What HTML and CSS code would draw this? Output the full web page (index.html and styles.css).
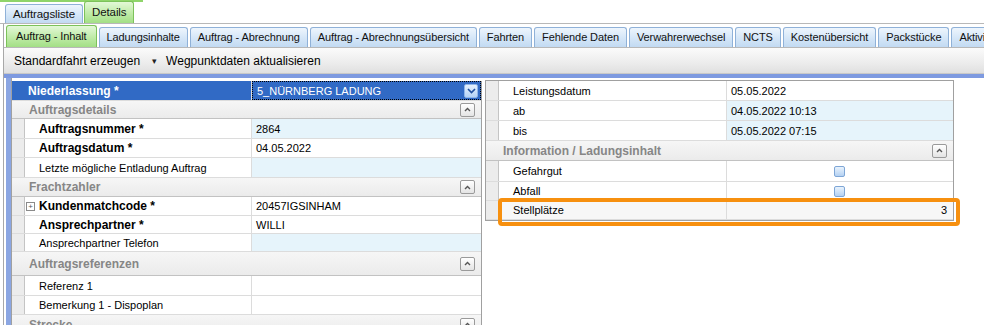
FILE: index.html
```html
<!DOCTYPE html>
<html>
<head>
<title>Auftrag</title>
<link rel="stylesheet" href="styles.css">
</head>
<body>

<div class="topstrip"></div>

<div class="tabs1">
  <div class="tab">Auftragsliste</div>
  <div class="tab active">Details</div>
</div>

<div class="frame">

  <div class="tabs2">
    <div class="tab active">Auftrag - Inhalt</div>
    <div class="tab">Ladungsinhalte</div>
    <div class="tab">Auftrag - Abrechnung</div>
    <div class="tab">Auftrag - Abrechnungsübersicht</div>
    <div class="tab">Fahrten</div>
    <div class="tab">Fehlende Daten</div>
    <div class="tab">Verwahrerwechsel</div>
    <div class="tab">NCTS</div>
    <div class="tab">Kostenübersicht</div>
    <div class="tab">Packstücke</div>
    <div class="tab">Aktivitäten</div>
  </div>

  <div class="toolbar">
    <span class="tbitem">Standardfahrt erzeugen</span>
    <span class="tbarrow">&#9662;</span>
    <span class="tbitem">Wegpunktdaten aktualisieren</span>
  </div>

  <div class="content">
    <div class="lstrip"></div>

    <div class="grid left">
      <div class="row selected h20">
        <div class="lbl b">Niederlassung *</div>
        <div class="val combo">5_NÜRNBERG LADUNG
          <span class="ddbtn"><svg width="9" height="6" viewBox="0 0 9 6"><path d="M1 1 L4.5 4.5 L8 1" fill="none" stroke="#1f4f9e" stroke-width="1.6"/></svg></span>
        </div>
      </div>

      <div class="sect h18">Auftragsdetails<span class="colbtn"><svg width="7" height="5" viewBox="0 0 7 5"><path d="M1 4 L3.5 1.5 L6 4" fill="none" stroke="#555" stroke-width="1.4"/></svg></span></div>
      <div class="row h20">
        <div class="gut"></div>
        <div class="lbl b">Auftragsnummer *</div>
        <div class="val blue">2864</div>
      </div>
      <div class="row h19">
        <div class="gut"></div>
        <div class="lbl b">Auftragsdatum *</div>
        <div class="val">04.05.2022</div>
      </div>
      <div class="row h20">
        <div class="gut"></div>
        <div class="lbl">Letzte mögliche Entladung Auftrag</div>
        <div class="val blue"></div>
      </div>

      <div class="sect h19">Frachtzahler<span class="colbtn"><svg width="7" height="5" viewBox="0 0 7 5"><path d="M1 4 L3.5 1.5 L6 4" fill="none" stroke="#555" stroke-width="1.4"/></svg></span></div>
      <div class="row h19">
        <div class="gut"></div>
        <div class="lbl b"><span class="plus">+</span>Kundenmatchcode *</div>
        <div class="val">20457IGSINHAM</div>
      </div>
      <div class="row h18">
        <div class="gut"></div>
        <div class="lbl b">Ansprechpartner *</div>
        <div class="val">WILLI</div>
      </div>
      <div class="row h18">
        <div class="gut"></div>
        <div class="lbl">Ansprechpartner Telefon</div>
        <div class="val blue"></div>
      </div>

      <div class="sect h24">Auftragsreferenzen<span class="colbtn"><svg width="7" height="5" viewBox="0 0 7 5"><path d="M1 4 L3.5 1.5 L6 4" fill="none" stroke="#555" stroke-width="1.4"/></svg></span></div>
      <div class="row h20">
        <div class="gut"></div>
        <div class="lbl">Referenz 1</div>
        <div class="val"></div>
      </div>
      <div class="row h19">
        <div class="gut"></div>
        <div class="lbl">Bemerkung 1 - Dispoplan</div>
        <div class="val"></div>
      </div>

      <div class="sect h20">Strecke<span class="colbtn"><svg width="7" height="5" viewBox="0 0 7 5"><path d="M1 4 L3.5 1.5 L6 4" fill="none" stroke="#555" stroke-width="1.4"/></svg></span></div>
    </div>

    <div class="divider"></div>

    <div class="rightwrap">
      <div class="grid right">
        <div class="row h20">
          <div class="gut"></div>
          <div class="lbl">Leistungsdatum</div>
          <div class="val">05.05.2022</div>
        </div>
        <div class="row h20">
          <div class="gut"></div>
          <div class="lbl">ab</div>
          <div class="val blue">04.05.2022 10:13</div>
        </div>
        <div class="row h20">
          <div class="gut"></div>
          <div class="lbl">bis</div>
          <div class="val blue">05.05.2022 07:15</div>
        </div>

        <div class="sect h20">Information / Ladungsinhalt<span class="colbtn"><svg width="7" height="5" viewBox="0 0 7 5"><path d="M1 4 L3.5 1.5 L6 4" fill="none" stroke="#555" stroke-width="1.4"/></svg></span></div>
        <div class="row h21">
          <div class="gut"></div>
          <div class="lbl">Gefahrgut</div>
          <div class="val center"><span class="chk"></span></div>
        </div>
        <div class="row h19">
          <div class="gut"></div>
          <div class="lbl">Abfall</div>
          <div class="val center"><span class="chk"></span></div>
        </div>
        <div class="row h19 gray">
          <div class="gut"></div>
          <div class="lbl">Stellplätze</div>
          <div class="val num">3</div>
        </div>
      </div>
      <div class="highlight"></div>
    </div>
  </div>

</div>

</body>
</html>
```

FILE: styles.css
```css
body {
    margin: 0;
    background: #ffffff;
    font-family: "Liberation Sans", sans-serif;
    font-size: 11px;
    color: #000;
    width: 984px;
    height: 325px;
    overflow: hidden;
}

.topstrip {
    width: 143px;
    height: 2px;
    background: #8fd46a;
}

/* tabs */
.tabs1 {
    display: flex;
    align-items: flex-end;
    gap: 1px;
    height: 21px;
    padding-left: 5px;
    border-bottom: 1px solid #b8b8b8;
}

.tab {
    height: 19px;
    line-height: 19px;
    padding: 0 7px;
    font-size: 11.5px;
    letter-spacing: -0.1px;
    color: #111;
    border: 1px solid #8fb1d8;
    border-bottom: none;
    border-radius: 3px 3px 0 0;
    background: linear-gradient(#eef5fd, #d6e7f8 50%, #c2daf2);
    white-space: nowrap;
    box-sizing: border-box;
}

.tab.active {
    height: 22px;
    line-height: 21px;
    border-color: #7cc25a;
    background: linear-gradient(#e3f8d7, #c2ecab 50%, #a3df86);
}

.frame {
    margin-left: 3px;
    border-left: 1px solid #a8a8a8;
}

.tabs2 {
    display: flex;
    align-items: flex-end;
    gap: 2px;
    height: 23px;
    padding-left: 2px;
    border-bottom: 1px solid #b8b8b8;
    overflow: hidden;
}

.tabs2 .tab {
    height: 20px;
    line-height: 19px;
    padding: 0 7px;
    font-size: 11px;
    letter-spacing: -0.1px;
    flex-shrink: 0;
}

.tabs2 .tab.active {
    height: 22px;
    line-height: 21px;
    padding: 0 9px;
}

.toolbar {
    display: flex;
    align-items: center;
    height: 25px;
    padding-left: 10px;
    font-size: 12px;
    background: linear-gradient(#fbfbfb, #ececec 60%, #e0e0e0);
    border-bottom: 1px solid #c8c8c8;
}

.tbarrow {
    font-size: 9px;
    margin: 0 9px 0 12px;
    color: #222;
}

/* content */
.content {
    display: flex;
    align-items: flex-start;
    border-top: 4px solid #7e9ae0;
    height: 260px;
}

.lstrip {
    width: 5px;
    align-self: stretch;
    border-left: 2px solid #ffffff;
    background: #8ba6e2;
    border-right: 1px solid #a0a0a0;
}

.grid {
    font-size: 11px;
    margin-top: 3px;
}

.grid.left {
    width: 469px;
    border-right: 1px solid #a0a0a0;
}

.divider {
    width: 3px;
}

.rightwrap {
    position: relative;
    margin-top: 2px;
}

.grid.right {
    margin-top: 0;
    width: 467px;
    border: 1px solid #a0a0a0;
}

.row {
    display: grid;
    grid-template-columns: 13px 227px 1fr;
    border-bottom: 1px solid #dcdcdc;
    box-sizing: border-box;
}

.grid.right .row {
    grid-template-columns: 13px 228px 1fr;
}

.h18 { height: 18px; }
.h19 { height: 19px; }
.h20 { height: 20px; }
.h21 { height: 21px; }
.h24 { height: 24px; }

.gut {
    background: #ececec;
    border-right: 1px solid #c4c4c4;
}

.lbl {
    position: relative;
    display: flex;
    align-items: center;
    padding-left: 14px;
    border-right: 1px solid #dcdcdc;
    white-space: nowrap;
    overflow: hidden;
}

.lbl.b {
    font-weight: bold;
    font-size: 12px;
}

.val {
    display: flex;
    align-items: center;
    padding-left: 4px;
    background: #ffffff;
    white-space: nowrap;
}

.val.blue {
    background: #e6f4fb;
}

.val.center {
    justify-content: center;
    padding-left: 0;
}

.val.num {
    justify-content: flex-end;
    padding-right: 6px;
}

.row.gray .lbl,
.row.gray .val {
    background: #f7f7f7;
}

.row.selected {
    grid-template-columns: 240px 1fr;
}

.row.selected .lbl,
.row.selected .val {
    background: #316ac5;
    color: #ffffff;
}

.row.selected .lbl {
    padding-left: 16px;
}

.val.combo {
    position: relative;
    outline: 1px dotted #000;
    outline-offset: -1px;
    border: 1px solid #316ac5;
}

.ddbtn {
    position: absolute;
    right: 2px;
    top: 2px;
    width: 14px;
    height: 14px;
    box-sizing: border-box;
    border: 1px solid #8fb5e8;
    border-radius: 2px;
    background: linear-gradient(#e4f0fd, #b5d3f6);
    display: flex;
    align-items: center;
    justify-content: center;
}

.sect {
    position: relative;
    display: flex;
    align-items: center;
    padding-left: 17px;
    font-weight: bold;
    font-size: 12px;
    color: #868686;
    background: linear-gradient(#f6f6f6, #ebebeb);
    border-bottom: 1px solid #c2c2c2;
    box-sizing: border-box;
}

.colbtn {
    position: absolute;
    right: 6px;
    top: 50%;
    margin-top: -7px;
    width: 15px;
    height: 14px;
    box-sizing: border-box;
    border: 1px solid #9a9a9a;
    border-radius: 2px;
    background: linear-gradient(#ffffff, #e4e4e4);
    display: flex;
    align-items: center;
    justify-content: center;
}

.plus {
    position: absolute;
    margin-left: -13px;
    width: 7px;
    height: 7px;
    border: 1px solid #8a8a8a;
    font-size: 8px;
    line-height: 7px;
    text-align: center;
    font-weight: normal;
    color: #555;
}

.chk {
    width: 11px;
    height: 11px;
    box-sizing: border-box;
    border: 1px solid #7ea6d6;
    border-radius: 2px;
    background: linear-gradient(#e9f3fd, #b4d1f2);
    margin-left: -2px;
}

.highlight {
    position: absolute;
    left: 13px;
    top: 118px;
    width: 462px;
    height: 28px;
    box-sizing: border-box;
    border: 4px solid #f7900f;
    border-radius: 4px;
}
```
